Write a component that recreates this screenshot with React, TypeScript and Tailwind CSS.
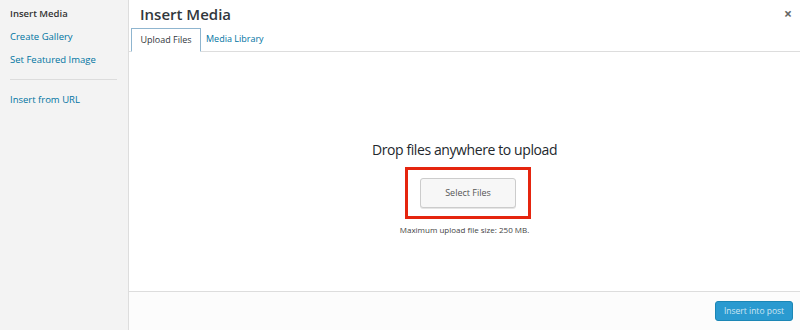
import React from 'react'

const font = { fontFamily: '"Open Sans", "Liberation Sans", sans-serif' }

const App: React.FC = () => {
  return (
    <div className="flex h-[330px] w-[800px] overflow-hidden bg-white text-[#444]" style={font}>
      <aside className="w-[129px] shrink-0 border-r border-[#dddddd] bg-[#f3f3f3] pt-[2px]">
        <ul className="text-[9.5px] leading-[23px]">
          <li className="px-[10px] font-semibold text-[#333]">Insert Media</li>
          <li className="px-[10px] text-[#0074a2]">Create Gallery</li>
          <li className="px-[10px] text-[#0074a2]">Set Featured Image</li>
        </ul>
        <div className="mx-[10px] my-[8px] w-[107px] border-t border-[#dcdcdc]" />
        <div className="px-[10px] text-[9.5px] leading-[23px] text-[#0074a2]">Insert from URL</div>
      </aside>

      <main className="flex min-w-0 flex-1 flex-col">
        <header className="flex h-[28px] items-center justify-between pl-[11px] pr-[8px]">
          <h1 className="text-[15px] font-semibold text-[#32373c]">Insert Media</h1>
          <span className="text-[14px] font-bold leading-none text-[#666]">×</span>
        </header>
        <nav className="flex h-[24px] items-end border-b border-[#dddddd] pl-[2px]">
          <div className="-mb-px flex h-[24px] w-[70px] items-center justify-center border border-[#8fb5cf] border-b-white bg-white text-[9px] text-[#32373c]">
            Upload Files
          </div>
          <div className="flex h-[24px] items-center px-[5px] text-[9px] text-[#0074a2]">Media Library</div>
        </nav>

        <section className="flex flex-1 flex-col items-center pt-[88px]">
          <p className="text-[14px] leading-[20px] tracking-[-0.4px] text-[#23282d]">Drop files anywhere to upload</p>
          <div className="ml-[7px] mt-[7px] flex h-[52px] w-[126px] items-center justify-center border-[3px] border-[#e5250f]">
            <button className="h-[30px] w-[96px] rounded-[3px] border border-[#cccccc] bg-[#f7f7f7] text-[9px] text-[#555] shadow-[0_1px_0_#e5e5e5]">
              Select Files
            </button>
          </div>
          <p className="mt-[5px] text-[8px] text-[#444]">Maximum upload file size: 250 MB.</p>
        </section>

        <footer className="flex h-[39px] items-center justify-end border-t border-[#dddddd] bg-[#fcfcfc] pr-[7px]">
          <button className="h-[20px] w-[78px] rounded-[3px] border border-[#1b86b5] bg-[#2a9ad0] text-[8.5px] text-[#cfe6f3]">
            Insert into post
          </button>
        </footer>
      </main>
    </div>
  )
}

export default App
